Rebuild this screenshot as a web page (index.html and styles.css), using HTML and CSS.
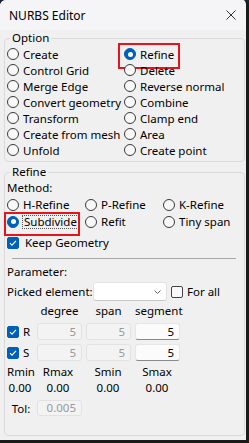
FILE: index.html
```html
<!DOCTYPE html>
<html>
<head>
<meta charset="utf-8">
<link rel="stylesheet" href="styles.css">
</head>
<body>
<div class="window">
  <div class="titlebar">
    <span class="title">NURBS Editor</span>
    <svg class="close" width="10" height="10" viewBox="0 0 10 10"><path d="M0.5 0.5 L9.5 9.5 M9.5 0.5 L0.5 9.5" stroke="#333" stroke-width="1" fill="none"/></svg>
  </div>
  <div class="content">
    <fieldset class="group option">
      <legend>Option</legend>
      <div class="opts">
        <label class="radio"><span class="dot"></span>Create</label>
        <label class="radio on mark mark-refine"><span class="dot"></span>Refine</label>
        <label class="radio"><span class="dot"></span>Control Grid</label>
        <label class="radio"><span class="dot"></span>Delete</label>
        <label class="radio"><span class="dot"></span>Merge Edge</label>
        <label class="radio"><span class="dot"></span>Reverse normal</label>
        <label class="radio"><span class="dot"></span>Convert geometry</label>
        <label class="radio"><span class="dot"></span>Combine</label>
        <label class="radio"><span class="dot"></span>Transform</label>
        <label class="radio"><span class="dot"></span>Clamp end</label>
        <label class="radio"><span class="dot"></span>Create from mesh</label>
        <label class="radio"><span class="dot"></span>Area</label>
        <label class="radio"><span class="dot"></span>Unfold</label>
        <label class="radio"><span class="dot"></span>Create point</label>
      </div>
    </fieldset>
    <fieldset class="group refine">
      <legend>Refine</legend>
      <div class="row">Method:</div>
      <div class="methods">
        <label class="radio tall"><span class="dot"></span>H-Refine</label>
        <label class="radio tall"><span class="dot"></span>P-Refine</label>
        <label class="radio tall"><span class="dot"></span>K-Refine</label>
        <label class="radio tall on mark mark-sub"><span class="dot"></span><span class="focus">Subdivide</span></label>
        <label class="radio tall"><span class="dot"></span>Refit</label>
        <label class="radio tall"><span class="dot"></span>Tiny span</label>
      </div>
      <label class="checkrow keep"><span class="check on"><svg width="12" height="12" viewBox="0 0 12 12"><path d="M3 6.2 L5 8.2 L9 3.8" stroke="#fff" stroke-width="1.2" fill="none"/></svg></span>Keep Geometry</label>
      <div class="sep"></div>
      <div class="row param">Parameter:</div>
      <div class="picked">
        <span class="picked-label">Picked element:</span>
        <span class="combo"><svg width="7" height="4" viewBox="0 0 7 4"><path d="M0.5 0.5 L3.5 3.5 L6.5 0.5" stroke="#666" stroke-width="1" fill="none"/></svg></span>
        <label class="checkrow forall"><span class="check"></span>For all</label>
      </div>
      <div class="ptable">
        <span></span><span class="hdr">degree</span><span class="hdr">span</span><span class="hdr">segment</span>
        <label class="checkrow rs"><span class="check on"><svg width="12" height="12" viewBox="0 0 12 12"><path d="M3 6.2 L5 8.2 L9 3.8" stroke="#fff" stroke-width="1.2" fill="none"/></svg></span>R</label>
        <span class="field dis">5</span><span class="field dis">5</span><span class="field">5</span>
        <label class="checkrow rs"><span class="check on"><svg width="12" height="12" viewBox="0 0 12 12"><path d="M3 6.2 L5 8.2 L9 3.8" stroke="#fff" stroke-width="1.2" fill="none"/></svg></span>S</label>
        <span class="field dis">5</span><span class="field dis">5</span><span class="field">5</span>
      </div>
      <div class="ranges">
        <span>Rmin</span><span>Rmax</span><span>Smin</span><span>Smax</span>
        <span>0.00</span><span>0.00</span><span>0.00</span><span>0.00</span>
      </div>
      <div class="tol">
        <span class="tol-label">Tol:</span>
        <span class="field dis">0.005</span>
      </div>
    </fieldset>
  </div>
</div>
</body>
</html>
```
FILE: styles.css
```css
* { box-sizing: border-box; }
html { background: #1e2232; }
body { margin: 0; font-family: "Noto Sans", sans-serif; font-size: 11.5px; color: #000; }

.window {
  width: 249px; height: 443px; background: #f0f0f0;
  border-right: 3px solid #1b1b1b; border-bottom: 3px solid #1b1b1b;
  border-top-left-radius: 6px; border-top-right-radius: 6px;
  overflow: hidden; display: flex; flex-direction: column;
}
.titlebar {
  height: 30px; flex: none; background: #f5f5f7;
  display: flex; align-items: center; justify-content: space-between;
  padding: 0 10px 0 9px;
}
.title { font-size: 12px; }
.close { display: block; }

.content { flex: 1; display: flex; flex-direction: column; gap: 2px; padding: 0 1px 4px 4px; }

.group { margin: 0; border: 1px solid #dadada; border-radius: 4px; padding: 0 2px 3px 2px; min-width: 0; }
.group legend { padding: 0 2px; margin-left: 3px; line-height: 16px; }
.refine { flex: 1; }

.opts { display: grid; grid-template-columns: 117px 1fr; }
.radio { position: relative; display: flex; align-items: center; gap: 4px; height: 16px; white-space: nowrap; }
.radio.tall { height: 17px; }
.dot { flex: none; width: 12px; height: 12px; border: 1px solid #3a3a3a; border-radius: 50%; background: #f8f8f8; }
.radio.on .dot { background: #005fb8; border-color: #005fb8; display: flex; align-items: center; justify-content: center; }
.radio.on .dot::after { content: ""; width: 5px; height: 5px; border-radius: 50%; background: #fff; }

.mark::after { content: ""; position: absolute; border: 2px solid #e8141b; pointer-events: none; }
.mark-refine::after { left: -6px; top: -3px; width: 58px; height: 22px; }
.mark-sub::after { left: -3px; top: -1px; width: 72px; height: 20px; }
.focus { border: 1px dotted #555; padding: 0 1px; line-height: 12px; margin-left: -1px; }

.row { height: 16px; line-height: 16px; }
.methods { display: grid; grid-template-columns: 78px 78px 1fr; }

.checkrow { display: flex; align-items: center; gap: 4px; white-space: nowrap; }
.check { flex: none; width: 12px; height: 12px; border: 1px solid #444; border-radius: 2px; background: #f8f8f8; display: flex; }
.check.on { background: #005fb8; border-color: #005fb8; }
.check.on svg { margin: -1px; }
.keep { height: 17px; margin-top: 4px; gap: 6px; }

.sep { height: 1px; background: #a8a8a8; margin: 7px 6px 0 5px; }
.param { margin-top: 5px; }

.picked { display: flex; align-items: center; height: 19px; margin-top: 2px; }
.picked-label { width: 86px; }
.combo { width: 74px; height: 19px; background: #fff; border: 1px solid #e2e2e2; border-bottom-color: #c8c8c8; border-radius: 3px; display: flex; align-items: center; justify-content: flex-end; padding-right: 5px; }
.forall { margin-left: 4px; gap: 4px; }

.ptable { display: grid; grid-template-columns: 26px 45px 45px 45px; column-gap: 4px; row-gap: 4px; grid-template-rows: 16px 17px 17px; margin-top: 2px; }
.hdr { text-align: center; line-height: 16px; }
.rs { gap: 4px; }
.field { height: 17px; line-height: 15px; text-align: right; padding: 0 5px; background: #fbfbfb; border: 1px solid #e6e6e6; border-bottom-color: #8a8a8a; border-radius: 3px; }
.field.dis { background: #f3f3f3; border-color: #e2e2e2; color: #9a9a9a; }

.ranges { display: grid; grid-template-columns: 26px 50px 50px 48px; grid-auto-rows: 16px; line-height: 16px; text-align: center; margin-top: 3px; }
.tol { display: grid; grid-template-columns: 26px 45px; column-gap: 4px; margin-top: 4px; align-items: center; }
.tol-label { text-align: center; padding-left: 2px; }
.tol .field { height: 16px; line-height: 14px; }
```
